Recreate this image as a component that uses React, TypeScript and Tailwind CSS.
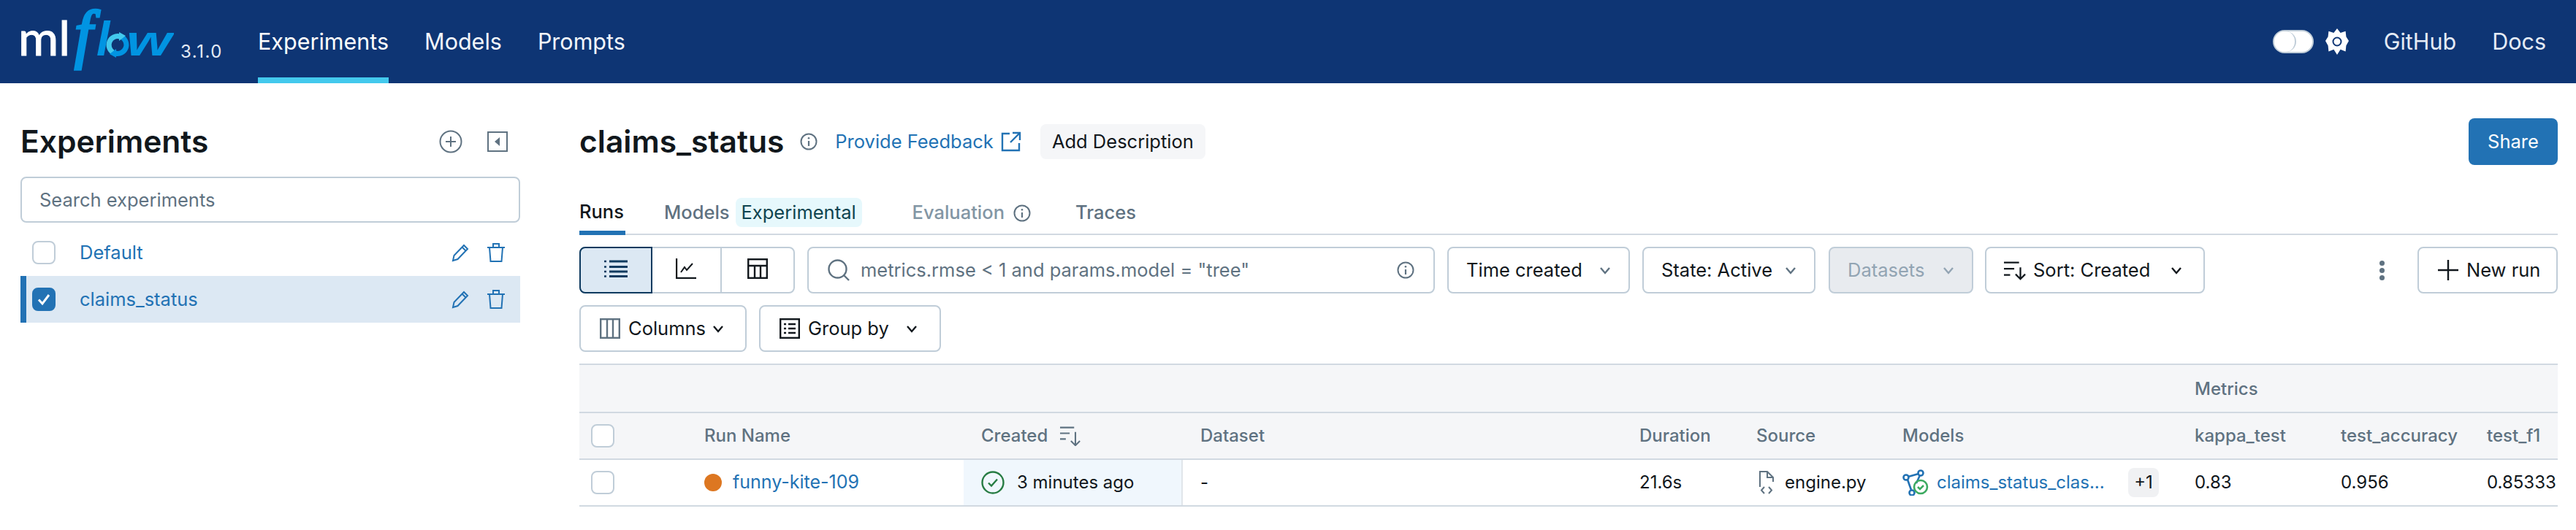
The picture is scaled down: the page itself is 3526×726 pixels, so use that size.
import type { ReactNode } from "react";

const FONT = "font-['Inter','Noto_Sans',sans-serif]";

function Chevron({ className = "text-[#11171c]" }: { className?: string }) {
  return (
    <svg viewBox="0 0 16 16" className={`h-[16px] w-[16px] ${className}`} fill="none" stroke="currentColor" strokeWidth="2.4">
      <path d="M2 5l6 7 6-7" />
    </svg>
  );
}

function InfoIcon({ className = "" }: { className?: string }) {
  return (
    <svg viewBox="0 0 24 24" className={`text-[#5f7281] ${className}`} fill="none" stroke="currentColor" strokeWidth="2">
      <circle cx="12" cy="12" r="10.5" />
      <path d="M12 11v7" strokeWidth="2.2" />
      <circle cx="12" cy="7.3" r="1.3" fill="currentColor" stroke="none" />
    </svg>
  );
}

function Pencil() {
  return (
    <svg viewBox="0 0 26 26" className="h-[26px] w-[26px] text-[#2272b4]" fill="none" stroke="currentColor" strokeWidth="2">
      <path d="M2 24l1.5-7L17 3l5 5L8.500 22z" />
      <path d="M14.500 5.500l5 5" />
    </svg>
  );
}

function Trash() {
  return (
    <svg viewBox="0 0 26 28" className="h-[28px] w-[26px] text-[#2272b4]" fill="none" stroke="currentColor" strokeWidth="2">
      <path d="M1 7h24M9 7V2h8v5M4 7l1.500 19h15L22 7" />
    </svg>
  );
}

function Checkbox({ checked = false }: { checked?: boolean }) {
  return (
    <span
      className={`flex h-[32px] w-[32px] items-center justify-center rounded-[8px] border-2 ${
        checked ? "border-[#2272b4] bg-[#2272b4]" : "border-[#c0cdd8] bg-white"
      }`}
    >
      {checked && (
        <svg viewBox="0 0 20 20" className="h-[20px] w-[20px]" fill="none" stroke="white" strokeWidth="3">
          <path d="M3 10.500l5 5.500L17 4" />
        </svg>
      )}
    </span>
  );
}

function ExperimentRow({ name, selected }: { name: string; selected?: boolean }) {
  return (
    <div
      className={`flex h-[64px] items-center border-l-[8px] pl-[8px] pr-[20px] ${
        selected ? "border-[#2272b4] bg-[#dce8f3]" : "border-transparent"
      }`}
    >
      <Checkbox checked={selected} />
      <span className="ml-[33px] flex-1 pt-[1px] text-[25.5px] text-[#2272b4]">{name}</span>
      <Pencil />
      <span className="ml-[22px]">
        <Trash />
      </span>
    </div>
  );
}

function ToolButton({ children, className = "" }: { children: ReactNode; className?: string }) {
  return (
    <div className={`flex h-[64px] items-center rounded-[8px] border-2 border-[#c0cdd8] bg-white text-[25.5px] text-[#11171c] ${className}`}>
      {children}
    </div>
  );
}

function Logo() {
  return (
    <svg viewBox="-8 0 218 100" className="ml-[-8px] h-[100px] w-[218px] shrink-0">
      <text x="-3" y="76" fontFamily="Lato" fontSize="65" fill="#ffffff" stroke="#ffffff" strokeWidth="1" textLength="71" lengthAdjust="spacingAndGlyphs">
        ml
      </text>
      <g fill="#0194e2" fontFamily="'Liberation Sans'" fontStyle="italic" fontWeight="700">
        <text x="74" y="76" fontFamily="'Liberation Serif'" fontSize="88" fontWeight="400" stroke="#0194e2" strokeWidth="3.500">
          f
        </text>
        <text x="104" y="76" fontSize="66">
          l
        </text>
        <text x="145" y="76" fontSize="60" textLength="62" lengthAdjust="spacingAndGlyphs">
          w
        </text>
      </g>
      {/* the o of the logo is two arrows chasing each other */}
      <g fill="none" strokeWidth="7">
        <path d="M127 72a12 12 0 0 1 9-22" stroke="#43c9ed" />
        <path d="M139 51a12 12 0 0 1-9 22" stroke="#0194e2" />
      </g>
      <path d="M135 44v12l9-7z" fill="#43c9ed" />
      <path d="M131 67v12l-9-5z" fill="#0194e2" />
    </svg>
  );
}

function HeaderCell({ children, className = "" }: { children?: ReactNode; className?: string }) {
  return <div className={`flex items-center px-[24px] text-[24px] font-medium text-[#5f7281] ${className}`}>{children}</div>;
}

function BodyCell({ children, className = "" }: { children?: ReactNode; className?: string }) {
  return <div className={`flex items-center px-[24px] text-[24px] text-[#11171c] ${className}`}>{children}</div>;
}

const GRID = "grid grid-cols-[147px_379px_300px_601px_160px_200px_400px_200px_200px_121px]";

export default function App() {
  return (
    <div className={`h-[726px] w-[3526px] overflow-hidden bg-white ${FONT}`}>
      <header className="flex h-[114px] items-stretch bg-[#0e3574] pl-[28px] pr-[41px] text-white">
        <div className="flex w-[325px] items-start">
          <Logo />
          <span className="ml-[9px] mt-[53px] text-[24px] tracking-[1.5px] text-[#e4ebf5]">3.1.0</span>
        </div>
        <nav className="flex items-stretch gap-[49px] text-[30.5px]">
          <span className="flex items-center border-b-[8px] border-[#43c9ed] pt-[8px]">Experiments</span>
          <span className="flex items-center text-[#f2f6fb]">Models</span>
          <span className="flex items-center text-[#f2f6fb]">Prompts</span>
        </nav>
        <div className="ml-auto flex items-center">
          <span className="flex h-[32px] w-[56px] rounded-full border-2 border-[#c0cdd8] bg-white">
            <span className="h-full w-[30px] rounded-full border-r-2 border-[#c0cdd8] bg-white" />
          </span>
          <svg viewBox="0 0 32 36" className="ml-[16px] h-[36px] w-[32px]">
            <path
              d="M16 0l4.600 6 7-2.200.800 7.400L32 17l-3.600 6.400-.8 8-7-2.600L16 36l-4.600-7.200-7 2.600-.8-8L0 17l3.600-5.800.8-7.400 7 2.200z"
              fill="white"
            />
            <circle cx="16" cy="18" r="4" fill="white" />
            <circle cx="16" cy="18" r="5.500" fill="none" stroke="#0e3574" strokeWidth="2" />
          </svg>
          <span className="ml-[48px] text-[30.5px] text-[#e4ebf5]">GitHub</span>
          <span className="ml-[49px] text-[30.5px] text-[#e4ebf5]">Docs</span>
        </div>
      </header>

      <div className="flex pt-[48px]">
        <aside className="ml-[28px] w-[684px] shrink-0">
          <div className="flex h-[64px] items-center">
            <h2 className="flex-1 text-[42.5px] font-semibold text-[#11171c]">Experiments</h2>
            <svg viewBox="0 0 32 32" className="h-[32px] w-[32px] text-[#5f7281]" fill="none" stroke="currentColor" strokeWidth="2">
              <circle cx="16" cy="16" r="14.500" />
              <path d="M16 9v14M9 16h14" />
            </svg>
            <svg viewBox="0 0 28 28" className="ml-[34px] mr-[17px] h-[28px] w-[28px] text-[#5f7281]">
              <rect x="1" y="1" width="26" height="26" fill="none" stroke="currentColor" strokeWidth="2" />
              <path d="M17 8v12l-7-6z" fill="currentColor" />
            </svg>
          </div>
          <div className="mt-[16px] flex h-[63px] items-center rounded-[8px] border-2 border-[#c0cdd8] px-[24px] pt-[1px] text-[25.5px] text-[#5f7281]">
            Search experiments
          </div>
          <div className="mt-[9px]">
            <ExperimentRow name="Default" />
            <ExperimentRow name="claims_status" selected />
          </div>
        </aside>

        <main className="ml-[81px] w-[2708px]">
          <div className="flex h-[64px] items-center">
            <h1 className="text-[42.5px] font-semibold text-[#11171c]">claims_status</h1>
            <InfoIcon className="ml-[22px] h-[24px] w-[24px]" />
            <span className="ml-[24px] text-[25.5px] text-[#2272b4]">Provide Feedback</span>
            <svg viewBox="0 0 28 28" className="ml-[10px] h-[28px] w-[28px] text-[#2272b4]" fill="none" stroke="currentColor" strokeWidth="2.400">
              <path d="M12 3H2v23h23V16M16 2h10v10M26 2L13 15" />
            </svg>
            <span className="ml-[26px] flex h-[48px] w-[226px] items-center justify-center rounded-[8px] bg-[#f5f6f8] text-[25.5px] text-[#11171c]">
              Add Description
            </span>
            <span className="ml-auto flex h-[64px] w-[122px] items-center justify-center rounded-[8px] bg-[#2272b4] text-[25.5px] text-white">Share</span>
          </div>

          <div className="mt-[36px] flex h-[60px] items-stretch border-b-[2px] border-[#d1d9e1] text-[25.5px] font-medium">
            <span className="mb-[-2px] flex w-[63px] items-center border-b-[6px] border-[#2272b4] pt-[2px] text-[#11171c]">Runs</span>
            <span className="ml-[53px] flex items-center text-[#5f7281]">Models</span>
            <span className="ml-[8px] flex items-center">
              <span className="flex h-[40px] w-[173px] items-center justify-center rounded-[8px] bg-[#e6f8fc] font-normal text-[#0e4450]">Experimental</span>
            </span>
            <span className="ml-[69px] flex items-center text-[#8396a5]">Evaluation</span>
            <InfoIcon className="ml-[12px] mt-[18px] h-[24px] w-[24px]" />
            <span className="ml-[61px] flex items-center text-[#5f7281]">Traces</span>
          </div>

          <div className="mt-[16px] flex">
            <div className="flex h-[64px] w-[295px] rounded-[8px] border-2 border-[#c0cdd8]">
              <span className="m-[-2px] flex w-[100px] items-center justify-center rounded-l-[8px] border-2 border-[#0e3a5f] bg-[#dce8f3]">
                <svg viewBox="0 0 32 24" className="mb-[4px] h-[24px] w-[32px] text-[#0e3a5f]" stroke="currentColor" fill="none">
                  <path d="M7 2h25M7 9.500h25M7 16h25M7 22.500h25" strokeWidth="3" />
                  <path d="M0 2h3M0 9.500h3M0 16h3M0 22.500h3" strokeWidth="2.500" />
                </svg>
              </span>
              <span className="flex w-[97px] items-center justify-center border-r-2 border-[#c0cdd8]">
                <svg viewBox="0 0 28 28" className="mb-[4px] h-[28px] w-[28px] text-[#11171c]" stroke="currentColor" fill="none" strokeWidth="2">
                  <path d="M1 0v27h27" strokeWidth="2.400" />
                  <path d="M7 19l5-7 3 4 8-9" />
                </svg>
              </span>
              <span className="flex flex-1 items-center justify-center">
                <svg viewBox="0 0 28 28" className="mb-[4px] h-[28px] w-[28px] text-[#11171c]" stroke="currentColor" fill="none" strokeWidth="2.400">
                  <rect x="1.200" y="1.200" width="25.600" height="25.600" />
                  <path d="M1 10h26M10 10v17M18 10v17" />
                </svg>
              </span>
            </div>
            <ToolButton className="ml-[17px] w-[859px] pl-[26px] pr-[26px]">
              <svg viewBox="0 0 30 30" className="h-[30px] w-[30px] text-[#5f7281]" fill="none" stroke="currentColor" strokeWidth="2.400">
                <circle cx="13.500" cy="13.500" r="12" />
                <path d="M22 22l7 7" />
              </svg>
              <span className="ml-[15px] flex-1 text-[#5f7281]">metrics.rmse &lt; 1 and params.model = "tree"</span>
              <InfoIcon className="h-[24px] w-[24px]" />
            </ToolButton>
            <ToolButton className="ml-[17px] w-[250px] justify-between pl-[24px] pr-[24px]">
              Time created
              <Chevron className="text-[#5f7281]" />
            </ToolButton>
            <ToolButton className="ml-[17px] w-[237px] justify-between pl-[24px] pr-[24px]">
              State: Active
              <Chevron className="text-[#5f7281]" />
            </ToolButton>
            <ToolButton className="ml-[18px] w-[198px] justify-between !bg-[#e8ebef] pl-[24px] pr-[24px] !text-[#92a4b3]">
              Datasets
              <Chevron className="text-[#92a4b3]" />
            </ToolButton>
            <ToolButton className="ml-[16px] w-[301px] pl-[24px] pr-[29px]">
              <svg viewBox="0 0 32 28" className="h-[28px] w-[30px] text-[#11171c]" fill="none" stroke="currentColor" strokeWidth="2.400">
                <path d="M0 3h22M0 12h15M0 21h9M24 10v17M17 20l7 7 7-7" />
              </svg>
              <span className="ml-[10px] flex-1">Sort: Created</span>
              <Chevron />
            </ToolButton>
            <span className="ml-[218px] flex w-[48px] flex-col items-center justify-center gap-[3px]">
              <span className="h-[7px] w-[7px] rounded-full bg-[#5f7281]" />
              <span className="h-[7px] w-[7px] rounded-full bg-[#5f7281]" />
              <span className="h-[7px] w-[7px] rounded-full bg-[#5f7281]" />
            </span>
            <ToolButton className="ml-auto w-[192px] pl-[26px]">
              <svg viewBox="0 0 28 28" className="h-[28px] w-[28px] text-[#11171c]" stroke="currentColor" strokeWidth="2.400">
                <path d="M14 0v28M0 14h28" />
              </svg>
              <span className="ml-[11px]">New run</span>
            </ToolButton>
          </div>

          <div className="mt-[16px] flex">
            <ToolButton className="w-[229px] pl-[26px]">
              <svg viewBox="0 0 28 28" className="h-[28px] w-[28px] text-[#5f7281]" fill="none" stroke="currentColor" strokeWidth="2.400">
                <rect x="1.200" y="1.200" width="25.600" height="25.600" />
                <path d="M10 1v26M18 1v26" />
              </svg>
              <span className="ml-[11px]">Columns</span>
              <Chevron className="ml-[9px] text-[#11171c]" />
            </ToolButton>
            <ToolButton className="ml-[17px] w-[249px] pl-[26px]">
              <svg viewBox="0 0 28 28" className="h-[28px] w-[28px] text-[#11171c]" fill="none" stroke="currentColor" strokeWidth="2.400">
                <rect x="1.200" y="1.200" width="25.600" height="25.600" />
                <path d="M6 8h3M12 8h10M6 14h3M12 14h10M6 20h3M12 20h10" />
              </svg>
              <span className="ml-[11px] flex-1">Group by</span>
              <Chevron className="mr-[30px] text-[#11171c]" />
            </ToolButton>
          </div>

          <div className="mt-[16px] w-[2708px] overflow-hidden border-t-2 border-[#d1d9e1]">
            <div className={`${GRID} h-[66px] border-b-2 border-[#d1d9e1] bg-[#f5f6f8]`}>
              <div className="col-span-7" />
              <div className="col-span-3 flex items-center px-[24px] pt-[2px] text-[24px] font-medium text-[#5f7281]">Metrics</div>
            </div>
            <div className={`${GRID} h-[64px] border-b-2 border-[#d1d9e1] bg-[#f5f6f8]`}>
              <div className="flex items-center pl-[16px]">
                <Checkbox />
              </div>
              <HeaderCell>Run Name</HeaderCell>
              <HeaderCell>
                Created
                <svg viewBox="0 0 32 32" className="ml-[16px] h-[28px] w-[30px]" fill="none" stroke="currentColor" strokeWidth="2.400">
                  <path d="M0 3h22M0 12h15M0 21h9M24 10v21M17 24l7 7 7-7" />
                </svg>
              </HeaderCell>
              <HeaderCell>Dataset</HeaderCell>
              <HeaderCell>Duration</HeaderCell>
              <HeaderCell>Source</HeaderCell>
              <HeaderCell>Models</HeaderCell>
              <HeaderCell>kappa_test</HeaderCell>
              <HeaderCell>test_accuracy</HeaderCell>
              <HeaderCell className="!pr-0">test_f1</HeaderCell>
            </div>
            <div className={`${GRID} h-[64px] border-b-2 border-[#d1d9e1]`}>
              <div className="flex items-center pl-[16px]">
                <Checkbox />
              </div>
              <BodyCell>
                <span className="h-[24px] w-[24px] rounded-full bg-[#dd7721]" />
                <span className="ml-[15px] text-[25px] text-[#2272b4]">funny-kite-109</span>
              </BodyCell>
              <BodyCell className="border-r-2 border-[#e0e5ea] bg-[#f0f7fd]">
                <svg viewBox="0 0 32 32" className="h-[32px] w-[32px] text-[#277c43]" fill="none" stroke="currentColor" strokeWidth="2.400">
                  <circle cx="16" cy="16" r="14.500" />
                  <path d="M10 16.500l4 4 8-9" />
                </svg>
                <span className="ml-[17px]">3 minutes ago</span>
              </BodyCell>
              <BodyCell>-</BodyCell>
              <BodyCell>21.6s</BodyCell>
              <BodyCell>
                <svg viewBox="0 0 22 32" className="ml-[3px] h-[32px] w-[22px] text-[#5f7281]" fill="none" stroke="currentColor" strokeWidth="2">
                  <path d="M2 22V1h10l8 8v6M12 1v8h8" />
                  <path d="M8 22l-4 4.500 4 4.500M14 22l4 4.500-4 4.500" />
                </svg>
                <span className="ml-[14px]">engine.py</span>
              </BodyCell>
              <BodyCell>
                <svg viewBox="0 0 36 36" className="h-[36px] w-[36px] shrink-0" fill="none" strokeWidth="2.600">
                  <g stroke="#2272b4">
                    <circle cx="25" cy="5" r="3.500" />
                    <circle cx="5" cy="11" r="3.500" />
                    <circle cx="13" cy="32" r="3.500" />
                    <path d="M8 10l14-4M7 14l5 14M24 8l-5 11" />
                  </g>
                  <circle cx="25" cy="24" r="9" stroke="#3caa60" />
                  <path d="M21 24l3 3 5-5" stroke="#3caa60" />
                </svg>
                <span className="ml-[11px] w-[231px] whitespace-nowrap text-[#2272b4]">claims_status_clas...</span>
                <span className="ml-[31px] flex h-[40px] w-[42px] shrink-0 items-center justify-center rounded-[8px] bg-[#f0f1f3]">+1</span>
              </BodyCell>
              <BodyCell>0.83</BodyCell>
              <BodyCell>0.956</BodyCell>
              <BodyCell className="!pr-0">0.85333</BodyCell>
            </div>
          </div>
        </main>
      </div>
    </div>
  );
}
